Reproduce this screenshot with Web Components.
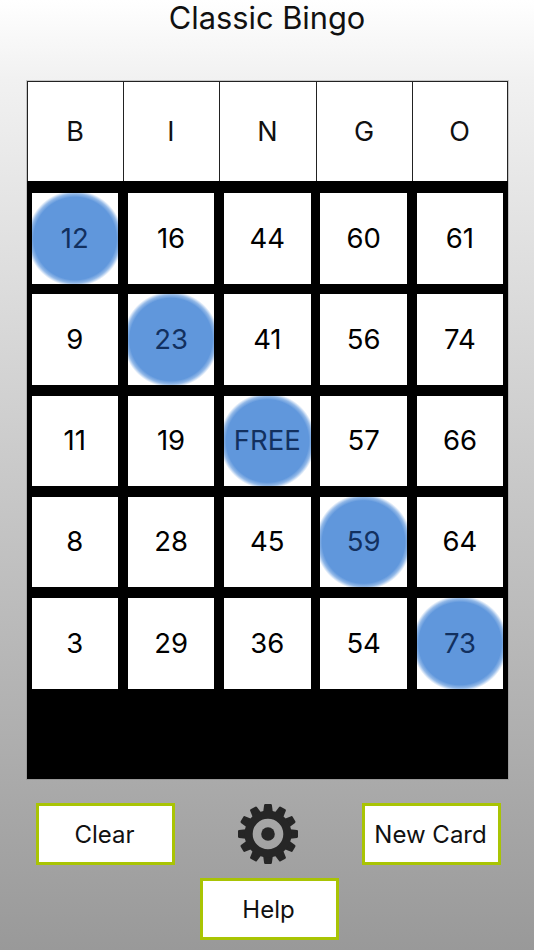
<!DOCTYPE html>
<html>
<head>
<meta charset="utf-8">
<title>Classic Bingo</title>
<style>
  html, body { margin: 0; padding: 0; }
  body { width: 534px; height: 950px; overflow: hidden; font-family: Inter, "Liberation Sans", sans-serif; }
</style>
</head>
<body>
<bingo-app></bingo-app>
<script>
class BingoCell extends HTMLElement {
  constructor() {
    super();
    this.attachShadow({ mode: 'open' });
    this.shadowRoot.innerHTML = `
      <style>
        :host {
          display: flex;
          align-items: center;
          justify-content: center;
          box-sizing: border-box;
          background: #fff;
          font-size: 27.5px;
          color: #000;
          height: 90.5px;
          padding-bottom: 1.5px;
        }
        :host([marked]) {
          background: radial-gradient(circle 48px at 50% 50%, #6097dc 0, #6097dc 86%, #93b9e8 93%, #fff 100%) #fff;
          color: #12305f;
        }
      </style>
      <slot></slot>`;
  }
}

class BingoBoard extends HTMLElement {
  constructor() {
    super();
    this.attachShadow({ mode: 'open' });
    const letters = ['B', 'I', 'N', 'G', 'O'];
    const numbers = [
      [12, 16, 44, 60, 61],
      [9, 23, 41, 56, 74],
      [11, 19, 'FREE', 57, 66],
      [8, 28, 45, 59, 64],
      [3, 29, 36, 54, 73],
    ];
    this.shadowRoot.innerHTML = `
      <style>
        :host {
          display: block;
          width: 481px;
          height: 698px;
          background: #000;
          box-shadow: 0 0 0 1px rgba(120,120,120,0.35);
        }
        .letters {
          display: grid;
          grid-template-columns: 95px 95px 96px 95px 94px;
          height: 100px;
          box-sizing: border-box;
          border: 1px solid #222;
          border-bottom: 0;
          background: #222;
          column-gap: 1px;
        }
        .letters div {
          display: flex;
          align-items: center;
          justify-content: center;
          background: #fff;
          font-size: 27px;
          color: #111;
        }
        .numbers {
          display: grid;
          grid-template-columns: repeat(5, 86.5px);
          column-gap: 9.8px;
          row-gap: 10.75px;
          padding: 12px 0 0 5px;
        }
      </style>
      <div class="letters">
        ${letters.map(l => `<div>${l}</div>`).join('')}
      </div>
      <div class="numbers">
        ${numbers.map((row, r) => row.map((n, c) =>
          `<bingo-cell ${r === c ? 'marked' : ''}>${n}</bingo-cell>`).join('')).join('')}
      </div>`;
  }
}

class BingoButton extends HTMLElement {
  constructor() {
    super();
    this.attachShadow({ mode: 'open' });
    this.shadowRoot.innerHTML = `
      <style>
        :host {
          display: flex;
          align-items: center;
          justify-content: center;
          box-sizing: border-box;
          width: 139px;
          height: 62px;
          background: #fff;
          border: 3px solid #a9c404;
          padding-right: 2px;
          font-size: 24px;
          color: #111;
        }
      </style>
      <slot></slot>`;
  }
}

class GearIcon extends HTMLElement {
  constructor() {
    super();
    this.attachShadow({ mode: 'open' });
    // trapezoid teeth, the round stroke gives them their soft corners
    const tooth = 'M-3.6-22L-2.7-28.8H2.7L3.6-22Z';
    const teeth = Array.from({ length: 12 }, (_, i) =>
      `<path d="${tooth}" transform="rotate(${i * 30})"/>`).join('');
    this.shadowRoot.innerHTML = `
      <style>
        :host { display: block; width: 62px; height: 62px; }
        svg { display: block; }
      </style>
      <svg width="62" height="62" viewBox="-31 -31 62 62" fill="#262626">
        <g stroke="#262626" stroke-width="2.4" stroke-linejoin="round">${teeth}</g>
        <path fill-rule="evenodd" d="M0-23.5a23.5 23.5 0 1 0 0 47a23.5 23.5 0 1 0 0-47zM0-15.3a15.3 15.3 0 1 1 0 30.6a15.3 15.3 0 1 1 0-30.6z"/>
        <circle r="6.8"/>
      </svg>`;
  }
}

class BingoApp extends HTMLElement {
  constructor() {
    super();
    this.attachShadow({ mode: 'open' });
    this.shadowRoot.innerHTML = `
      <style>
        :host {
          display: flex;
          flex-direction: column;
          align-items: center;
          width: 534px;
          height: 950px;
          background: linear-gradient(#ffffff 0, #f1f1f1 80px, #999999 100%);
        }
        h1 {
          margin: 0;
          height: 36px;
          line-height: 36px;
          font-size: 30.8px;
          font-weight: 400;
          color: #111;
        }
        bingo-board { margin-top: 45px; }
        .controls {
          display: grid;
          grid-template-columns: 164px 162px 139px;
          row-gap: 13px;
          align-items: center;
          margin-top: 24px;
          align-self: flex-start;
          margin-left: 36px;
        }
        gear-icon { margin-left: 37px; }
        .help { grid-column: 2; }
      </style>
      <h1>Classic Bingo</h1>
      <bingo-board></bingo-board>
      <div class="controls">
        <bingo-button>Clear</bingo-button>
        <gear-icon></gear-icon>
        <bingo-button>New Card</bingo-button>
        <bingo-button class="help">Help</bingo-button>
      </div>`;
  }
}

customElements.define('bingo-cell', BingoCell);
customElements.define('bingo-board', BingoBoard);
customElements.define('bingo-button', BingoButton);
customElements.define('gear-icon', GearIcon);
customElements.define('bingo-app', BingoApp);
</script>
</body>
</html>
